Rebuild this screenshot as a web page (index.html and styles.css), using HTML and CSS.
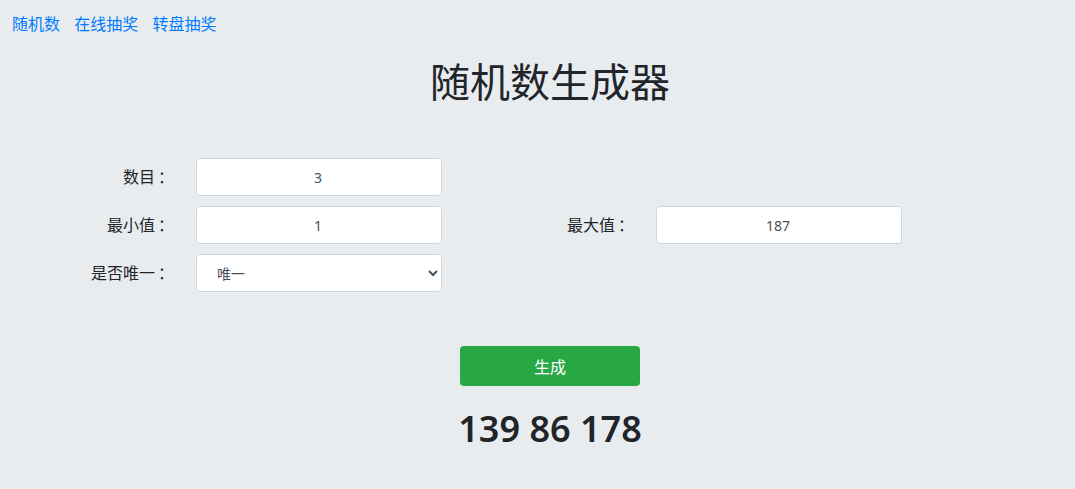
FILE: index.html
```html
<!DOCTYPE html>
<html lang="zh-CN">
<head>
    <meta charset="UTF-8">
    <meta name="viewport" content="width=device-width, initial-scale=1.0">
    <title>随机数生成器</title>
    <link rel="stylesheet" href="styles.css">
</head>
<body>
    <nav class="topnav">
        <a href="#">随机数</a>
        <a href="#">在线抽奖</a>
        <a href="#">转盘抽奖</a>
    </nav>

    <main class="main">
        <h1 class="title">随机数生成器</h1>

        <form class="form-grid">
            <label class="form-label" for="count">数目<span class="colon">：</span></label>
            <input class="form-control" id="count" type="text" value="3">
            <span></span><span></span>

            <label class="form-label" for="min">最小值<span class="colon">：</span></label>
            <input class="form-control" id="min" type="text" value="1">
            <label class="form-label" for="max">最大值<span class="colon">：</span></label>
            <input class="form-control" id="max" type="text" value="187">

            <label class="form-label" for="unique">是否唯一<span class="colon">：</span></label>
            <select class="form-control form-select" id="unique">
                <option>唯一</option>
                <option>不唯一</option>
            </select>
        </form>

        <div class="actions">
            <button class="btn-generate" type="button">生成</button>
        </div>

        <div class="result">139 86 178</div>
    </main>
</body>
</html>
```

FILE: styles.css
```css
body {
    margin: 0;
    background-color: #e9ecef;
    color: #212529;
    font-family: "Noto Sans", "Noto Sans CJK SC", sans-serif;
    font-size: 16px;
    line-height: 1.5;
}

.topnav { padding: 12px 12px 0; }
.topnav a {
    color: #007bff;
    text-decoration: none;
    margin-right: 10px;
}

.main { padding-left: 25px; }

.title {
    margin: 22px 0 52px;
    text-align: center;
    font-size: 40px;
    font-weight: 400;
    line-height: 48px;
}

.form-grid {
    display: grid;
    grid-template-columns: 146px 246px 164px 246px;
    column-gap: 25px;
    row-gap: 10px;
    align-items: center;
}

.form-label { text-align: right; }

/* 冒号居中显示 */
.colon {
    margin-left: 3px;
    margin-right: -3px;
}

.form-control {
    box-sizing: border-box;
    height: 38px;
    width: 100%;
    border: 1px solid #ced4da;
    border-radius: 4px;
    background: #fff;
    color: #495057;
    font-family: inherit;
    font-size: 14px;
    text-align: center;
    padding: 0 14px 0 12px;
}

.form-select {
    text-align: left;
    padding-left: 16px;
}

.actions {
    margin-top: 54px;
    text-align: center;
}

.btn-generate {
    width: 180px;
    height: 40px;
    border: none;
    border-radius: 4px;
    background-color: #28a745;
    color: #fff;
    font-family: inherit;
    font-size: 16px;
}

.result {
    margin-top: 19px;
    text-align: center;
    font-size: 36px;
    font-weight: 600;
    line-height: 48px;
}
```
